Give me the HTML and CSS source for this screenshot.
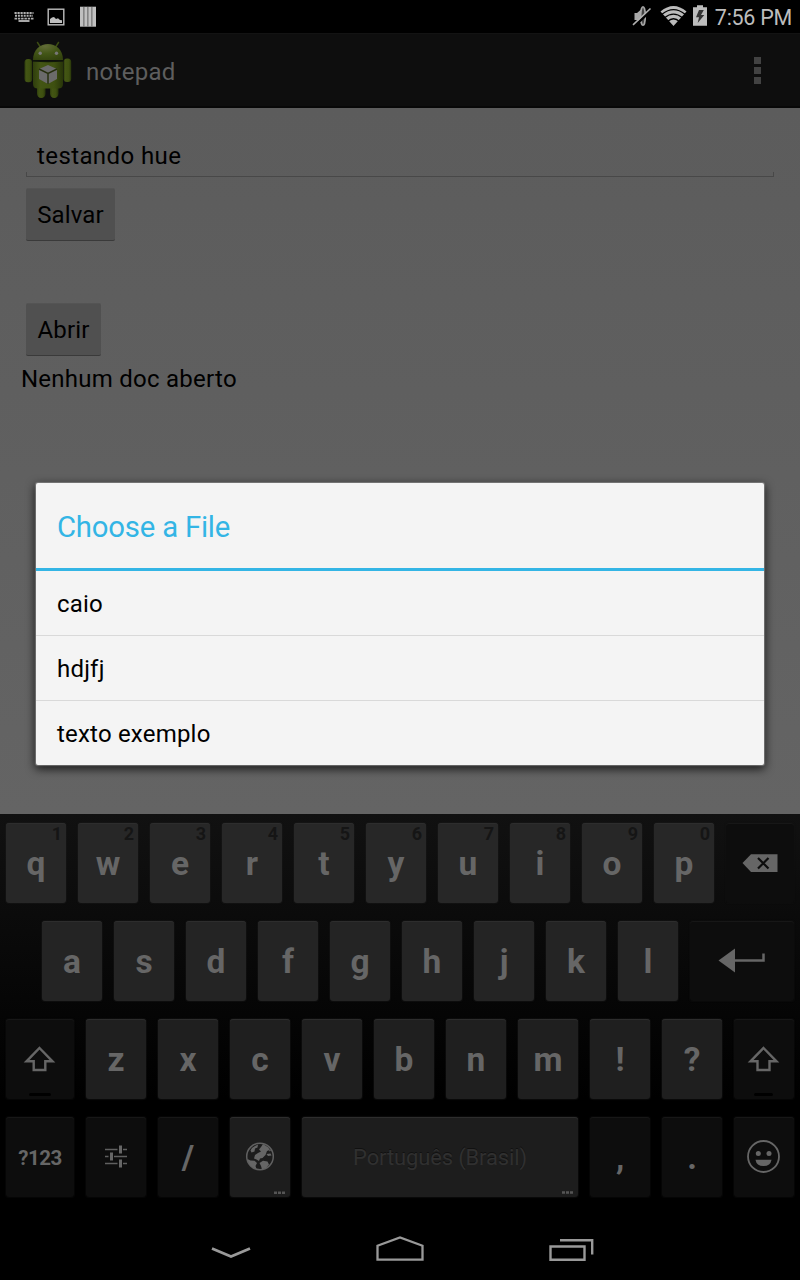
FILE: index.html
```
<!DOCTYPE html>
<html lang="pt-BR">
<head>
<meta charset="utf-8">
<title>notepad</title>
<link rel="stylesheet" href="styles.css">
</head>
<body>
<div class="screen">
  <header class="status">
    <svg class="status-left" width="110" height="33" viewBox="0 0 110 33">
      <g fill="none" stroke="#b0b0b0" stroke-width="1.9">
        <path d="M14.500 13H33.500" stroke-dasharray="2.2 .8"/>
        <path d="M15 15.800H33" stroke-dasharray="2 .9"/>
        <path d="M14.500 18.600H33.500" stroke-dasharray="2.5 .8"/>
        <path d="M18.500 21H29.500"/>
      </g>
      <rect x="48.200" y="9.200" width="15.600" height="15.600" fill="none" stroke="#bdbdbd" stroke-width="1.4"/>
      <path d="M50 23V19L52 17.500L54 17L56 19L58 18.300L60 20L62 20.300V23Z" fill="#c0c0c0"/>
      <path d="M80 6.700H96V26.700H80Z" fill="#c0c0c0"/>
      <path d="M83.900 7V26.500M87.900 7V26.500M91.900 7V26.500" stroke="#5f5f5f" stroke-width="1"/>
    </svg>
    <div class="status-right">
      <svg width="78" height="33" viewBox="630 0 78 33">
        <path d="M634.500 13H637L641 9.500V23L637 20H634.500Z" fill="#a8a8a8"/>
        <ellipse cx="643" cy="16" rx="2.300" ry="9.300" fill="#444" stroke="#a8a8a8" stroke-width="1.600"/>
        <path d="M634.500 26L652 9.500" stroke="#000" stroke-width="2.500"/>
        <path d="M633 24.800L650.500 8.500" stroke="#b0b0b0" stroke-width="1.600"/>
        <path d="M660.500 11.500Q673.500 .500 686.500 11.500L673.500 26Z" fill="#bcbcbc"/>
        <g fill="none" stroke="#000" stroke-width="1.300">
          <path d="M662 14.300Q673.500 5 685 14.300"/>
          <path d="M664.500 17.800Q673.500 10.500 682.500 17.800"/>
          <path d="M667.500 21.600Q673.500 16 679.500 21.600"/>
        </g>
        <path d="M697 5.300H703V7.300H707V25.700H693V7.300H697Z" fill="#bdbdbd"/>
        <path d="M699 10L696 17.200H699L697.700 23L704.300 15H701L703.800 10Z" fill="#333"/>
      </svg>
      <span class="clock">7:56 PM</span>
    </div>
  </header>

  <div class="actionbar">
    <svg class="logo" width="48" height="58" viewBox="24 41 48 58">
      <defs>
        <linearGradient id="droid" x1="0" x2="1"><stop offset="0" stop-color="#2f3e0d"/><stop offset=".25" stop-color="#435514"/><stop offset=".7" stop-color="#3e5010"/><stop offset="1" stop-color="#28350a"/></linearGradient>
        <radialGradient id="dome" cx=".4" cy=".15" r=".9"><stop offset="0" stop-color="#626c38"/><stop offset=".5" stop-color="#435617"/><stop offset="1" stop-color="#33430e"/></radialGradient>
      </defs>
      <path d="M37.500 42.500L41 48M58.500 42.500L55 48" stroke="#3c4c13" stroke-width="1.500" stroke-linecap="round"/>
      <rect x="37" y="82" width="8.500" height="16" rx="4.200" fill="url(#droid)"/>
      <rect x="50" y="82" width="8.500" height="16" rx="4.200" fill="url(#droid)"/>
      <rect x="24.500" y="59" width="7.700" height="23.300" rx="3.500" fill="url(#droid)"/>
      <rect x="63.500" y="58.500" width="7.700" height="23.500" rx="3.500" fill="url(#droid)"/>
      <path d="M33 61.500H63V84Q63 88.500 58 88.500H38Q33 88.500 33 84Z" fill="url(#droid)"/>
      <path d="M33 60C33 38.500 63 38.500 63 60Z" fill="url(#dome)"/>
      <path d="M33 60.700Q48 62.500 63 60.700" fill="none" stroke="#10170a" stroke-width="1.200"/>
      <circle cx="40.200" cy="53.200" r="1.700" fill="#777"/><circle cx="56.500" cy="53.200" r="1.700" fill="#777"/>
      <path d="M48 65L57 69V79L48 84L39 79V69Z" fill="#6b6b6b"/>
      <path d="M39 69L48 73.500L57 69M48 73.500V84" fill="none" stroke="#27300f" stroke-width="1.500"/>
    </svg>
    <span class="app-title">notepad</span>
    <div class="overflow"><i></i><i></i><i></i></div>
  </div>

  <main class="content">
    <div class="field"><span class="field-text">testando hue</span></div>
    <div class="btn btn-save"><span>Salvar</span></div>
    <div class="btn btn-open"><span>Abrir</span></div>
    <div class="label">Nenhum doc aberto</div>
  </main>

  <section class="keyboard">
    <div class="row">
      <div class="key">q<small>1</small></div><div class="key">w<small>2</small></div><div class="key">e<small>3</small></div><div class="key">r<small>4</small></div><div class="key">t<small>5</small></div><div class="key">y<small>6</small></div><div class="key">u<small>7</small></div><div class="key">i<small>8</small></div><div class="key">o<small>9</small></div><div class="key">p<small>0</small></div>
      <div class="key dark wide icon"><svg width="68" height="80" viewBox="726 823 68 80"><path d="M742.500 863L751 854.200H777.500V872H751Z" fill="#666"/><path d="M758 858L768.500 868.500M768.500 858L758 868.500" stroke="#0d0d0d" stroke-width="2.200"/></svg></div>
    </div>
    <div class="row row-home">
      <div class="key">a</div><div class="key">s</div><div class="key">d</div><div class="key">f</div><div class="key">g</div><div class="key">h</div><div class="key">j</div><div class="key">k</div><div class="key">l</div>
      <div class="key dark enter icon"><svg width="104" height="80" viewBox="690 921 104 80"><path d="M718.500 960.500L735 948.500V972.500Z" fill="#666"/><path d="M734 960.500H763.500V953.500" fill="none" stroke="#666" stroke-width="2.500"/></svg></div>
    </div>
    <div class="row">
      <div class="key dark wide icon"><svg width="68" height="80" viewBox="6 1019 68 80"><path d="M39.500 1048L52.500 1061.300H45.300V1070H33.700V1061.300H26.500Z" fill="none" stroke="#666" stroke-width="2.400"/><rect x="29" y="1093" width="22" height="3" rx="1.500" fill="#000"/></svg></div>
      <div class="key">z</div><div class="key">x</div><div class="key">c</div><div class="key">v</div><div class="key">b</div><div class="key">n</div><div class="key">m</div><div class="key">!</div><div class="key">?</div>
      <div class="key dark icon"><svg width="60" height="80" viewBox="734 1019 60 80"><path d="M763.500 1048L776.500 1061.300H769.500V1070H757.500V1061.300H750.500Z" fill="none" stroke="#666" stroke-width="2.400"/><rect x="754" y="1093" width="19" height="3" rx="1.500" fill="#000"/></svg></div>
    </div>
    <div class="row">
      <div class="key dark wide mode">?123</div>
      <div class="key dark icon"><svg width="60" height="80" viewBox="86 1117 60 80"><path d="M105 1149.500H117.500M123 1149.500H127M105 1156.500H108.500M114 1156.500H127M105 1163.500H117.500M123 1163.500H127" stroke="#606060" stroke-width="1.500"/><path d="M120.500 1145.500V1153.500M111.500 1152.500V1160.500M120.500 1159.500V1167.500" stroke="#666" stroke-width="3"/></svg></div>
      <div class="key dark">/</div>
      <div class="key icon"><svg width="60" height="80" viewBox="230 1117 60 80"><circle cx="260" cy="1156.500" r="13.300" fill="none" stroke="#606060" stroke-width="1.500"/><path d="M263 1144L268.500 1147.500L269.500 1150L267 1151L265.500 1155L262.500 1158L260 1158.500L259 1161L256.500 1159.500L254 1158.500L255 1155L258 1153L261 1151.500L259 1149.500L261 1147ZM252 1148L255 1146L258 1144.500L257.500 1147.500L255 1148.500L254.500 1151.500L251.500 1152.500L250.500 1150.500ZM247.500 1159L250.500 1160.500L254.500 1160.800L257 1163L255.500 1166L256.500 1169C251.500 1167.500 248 1164 247.500 1159ZM259.500 1163L263 1160.800L267.500 1161.500L269 1164.500L266 1168L262 1169.500L261 1166ZM266.500 1154L270.500 1153.500L271.500 1155.500L268 1156ZM269 1149L271 1150.500L269.500 1151.500Z" fill="#666"/><path d="M274 1192.700H285" stroke="#555" stroke-width="2.500" stroke-dasharray="3 1"/></svg></div>
      <div class="key space"><span>Português (Brasil)</span><svg width="13" height="3" viewBox="0 0 13 3"><path d="M1 1.500H12" stroke="#555" stroke-width="2.500" stroke-dasharray="3 1"/></svg></div>
      <div class="key dark">,</div><div class="key dark">.</div>
      <div class="key dark icon"><svg width="60" height="80" viewBox="734 1117 60 80"><circle cx="763.500" cy="1156.500" r="15.500" fill="none" stroke="#666" stroke-width="1.800"/><circle cx="758.300" cy="1153.500" r="2.500" fill="#666"/><circle cx="769" cy="1153.500" r="2.500" fill="#666"/><path d="M755.500 1159.700H771.500Q770.500 1166 763.500 1166Q756.500 1166 755.500 1159.700Z" fill="#666"/></svg></div>
    </div>
  </section>

  <nav class="navbar">
    <svg width="800" height="60" viewBox="0 1220 800 60" fill="none" stroke="#999">
      <path d="M212 1248.500L231 1256.500L250 1248.500" stroke-width="2.800"/>
      <path d="M377.500 1259.700V1245.700L400 1237.500L422.500 1245.700V1259.700Z" stroke-width="2.300"/>
      <path d="M550.500 1246.500H584.500V1259.700H550.500ZM560 1240.300H592.200V1254.500" stroke-width="2.400"/>
    </svg>
  </nav>

  <div class="dialog">
    <h1 class="dialog-title"><span>Choose a File</span></h1>
    <ul class="files">
      <li>caio</li>
      <li>hdjfj</li>
      <li>texto exemplo</li>
    </ul>
  </div>
</div>
</body>
</html>
```
FILE: styles.css
```
* { box-sizing: border-box; }
body { margin: 0; background: #000; font-family: Roboto, "Noto Sans", sans-serif; }
svg { display: block; }
.screen { position: relative; width: 800px; height: 1280px; display: flex; flex-direction: column; overflow: hidden; }

.status { height: 33px; display: flex; justify-content: space-between; background: #000; }
.status-right { display: flex; align-items: center; gap: 7px; padding-right: 8px; }
.clock { color: #bdbdbd; font-size: 21.5px; line-height: 33px; padding-top: 2px; white-space: nowrap; letter-spacing: -.28px; }

.actionbar { height: 75px; display: flex; align-items: center; padding: 0 39px 0 24px; background: #0e0e0e; border-top: 1px solid #131313; border-bottom: 2px solid #080808; }
.logo { margin-top: -1px; }
.app-title { margin-left: 14px; padding-top: 3px; color: #5e5e5e; font-size: 24px; letter-spacing: .3px; }
.overflow { margin-left: auto; display: flex; flex-direction: column; gap: 3px; }
.overflow i { width: 7px; height: 7px; background: #424242; }

.content { height: 706px; padding: 0 21px; display: flex; flex-direction: column; align-items: flex-start; background: linear-gradient(#5c5c5c, #5f5f5f 40%, #646464); color: #000; font-size: 24px; line-height: 28px; }
.field { align-self: stretch; height: 69px; margin: 0 5px; padding: 34px 11px 0; letter-spacing: .4px; background: linear-gradient(#484848, #484848) left bottom / 1px 5px no-repeat, linear-gradient(#484848, #484848) right bottom / 1px 5px no-repeat, linear-gradient(#484848, #484848) left bottom / 100% 1px no-repeat; }
.btn { height: 53px; margin-left: 5px; display: flex; align-items: center; justify-content: center; background: #505050; border-radius: 2px; border-top: 1px solid #545454; border-bottom: 1px solid #3a3a3a; letter-spacing: .15px; }
.btn-save { width: 89px; margin-top: 11px; }
.btn-open { width: 75px; margin-top: 62px; }
.label { margin-top: 9px; letter-spacing: .25px; }

.keyboard { height: 406px; padding: 9px 6px 0; display: flex; flex-direction: column; gap: 18px; background: linear-gradient(#111, #000 70%); }
.row { display: flex; gap: 12px; }
.row-home { padding-left: 36px; }
.key { position: relative; width: 60px; height: 80px; padding-top: 2px; display: flex; align-items: center; justify-content: center; border-radius: 3px; background: #242424; box-shadow: inset 0 1px #2d2d2d, 0 0 1px 1px rgba(28, 28, 28, .35); color: #666; font-size: 33.5px; font-weight: 700; line-height: 40px; }
.row:nth-child(1) .key { background: #272727; }
.row:nth-child(3) .key { background: #1f1f1f; }
.row:nth-child(4) .key { background: #1d1d1d; }
.row .key.dark { background: #0d0d0d; box-shadow: inset 0 1px #171717, 0 0 1px 1px rgba(18, 18, 18, .35); }
.key.icon { padding-top: 0; }
.key.wide { width: 68px; }
.key.enter { width: 104px; }
.key small { position: absolute; top: 0; right: 4px; color: #151515; font-size: 18px; line-height: 21px; }
.key.mode { font-size: 20.5px; letter-spacing: -.5px; }
.key.space { width: 276px; color: #303030; font-size: 22px; font-weight: 400; letter-spacing: -.15px; text-shadow: 0 -1px #111; }
.key.space svg { position: absolute; right: 4px; bottom: 3px; }

.navbar { height: 60px; background: #000; }

.dialog { position: absolute; left: 36px; top: 483px; width: 728px; height: 282px; border-radius: 2px; background: #f4f4f4; box-shadow: 0 0 1px 1px rgba(150, 150, 150, .6), 0 3px 10px 1px rgba(0, 0, 0, .75); overflow: hidden; }
.dialog-title { height: 88px; margin: 0; padding: 3px 21px 0; display: flex; align-items: center; border-bottom: 3px solid #33b5e5; color: #33b5e5; font-size: 29.3px; font-weight: 400; letter-spacing: -.2px; }
.files { list-style: none; margin: 0; padding: 0; font-size: 24px; letter-spacing: .2px; }
.files li { height: 65px; padding: 1px 21px 0; display: flex; align-items: center; border-bottom: 1px solid #d9d9d9; }
.files li:last-child { border-bottom: 0; }
```
